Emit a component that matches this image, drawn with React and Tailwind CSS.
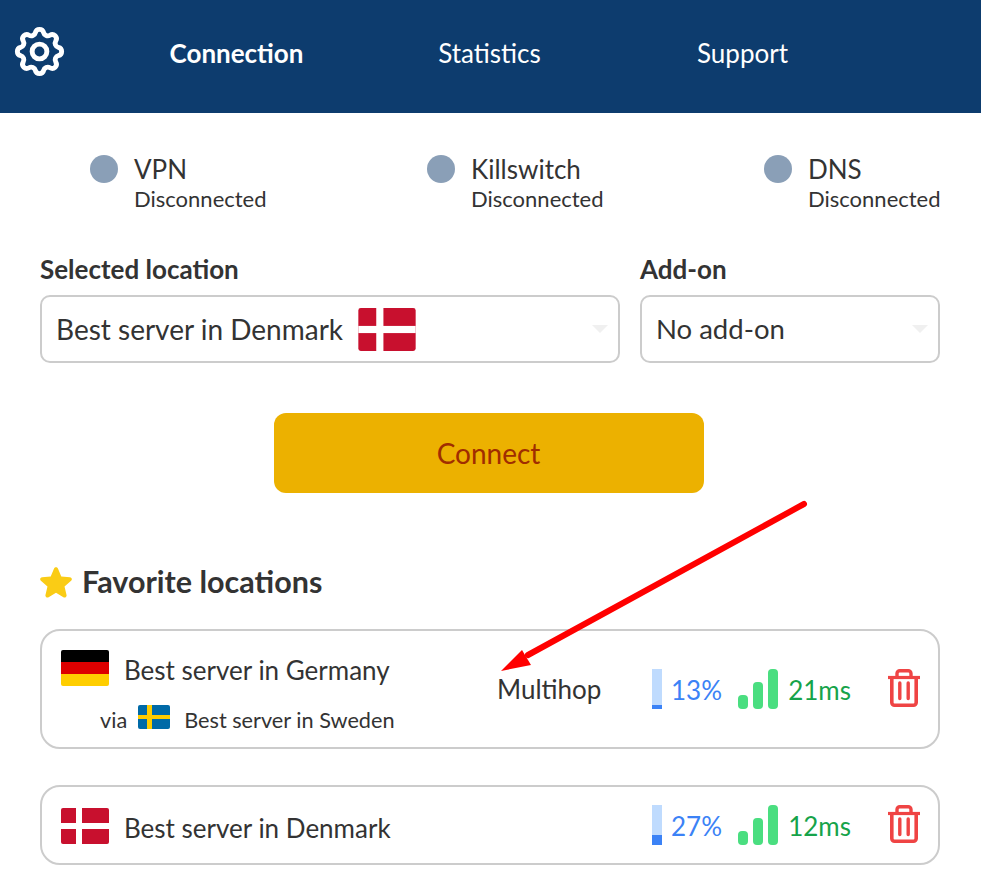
import React from "react";
import { HiOutlineCog } from "react-icons/hi";

const Dk = ({ w, h }) => (
  <svg width={w} height={h} viewBox="0 0 48 36" className="shrink-0">
    <rect width="48" height="36" rx="2" fill="#c8102e" />
    <rect x="15" width="6" height="36" fill="#fff" />
    <rect y="15" width="48" height="6" fill="#fff" />
  </svg>
);
const De = () => (
  <svg width="48" height="36" viewBox="0 0 48 36" className="shrink-0">
    <defs><clipPath id="dc"><rect width="48" height="36" rx="2" /></clipPath></defs>
    <g clipPath="url(#dc)">
      <rect width="48" height="12" fill="#000" />
      <rect y="12" width="48" height="12" fill="#dd0000" />
      <rect y="24" width="48" height="12" fill="#ffce00" />
    </g>
  </svg>
);
const Se = () => (
  <svg width="32" height="24" viewBox="0 0 32 24" className="shrink-0">
    <rect width="32" height="24" rx="2" fill="#006aa7" />
    <rect x="9" width="5" height="24" fill="#fecc00" />
    <rect y="10" width="32" height="4" fill="#fecc00" />
  </svg>
);
const Trash = () => (
  <svg width="32" height="38" viewBox="0 0 32 38" fill="none" stroke="#ef4444" className="shrink-0 -mt-[2px]">
    <path d="M0 8.500h32" strokeWidth="3.200" />
    <path d="M3.800 8.500V33.500a2.700 2.700 0 0 0 2.700 2.700h19a2.700 2.700 0 0 0 2.700-2.700V8.500" strokeWidth="3.600" />
    <path d="M9 8V4.500a2.800 2.800 0 0 1 2.800-2.800h8.400A2.800 2.800 0 0 1 23 4.500V8" strokeWidth="3.400" />
    <path d="M11.800 14V29.500M20.200 14V29.500" strokeWidth="3.400" strokeLinecap="round" />
  </svg>
);
const Load = ({ fill }) => (
  <div className="w-[10px] h-10 bg-[#bfdbfe] flex flex-col justify-end shrink-0">
    <div className="bg-[#3b82f6] w-full" style={{ height: fill }} />
  </div>
);
const Signal = () => (
  <div className="flex items-end gap-[5px] shrink-0">
    <div className="w-[10px] h-[14px] rounded bg-[#4ade80]" />
    <div className="w-[10px] h-[27px] rounded bg-[#4ade80]" />
    <div className="w-[10px] h-10 rounded bg-[#4ade80]" />
  </div>
);
const Stats = ({ pct, fill, ms }) => (
  <div className="flex items-center">
    <Load fill={fill} />
    <span className="w-[60px] text-right text-[26px] text-[#3b82f6] leading-10 pt-[2px]">{pct}</span>
    <div className="ml-[16px]"><Signal /></div>
    <span className="w-[73px] text-right text-[26px] text-[#16a34a] leading-10 pt-[2px]">{ms}</span>
    <div className="ml-[37px]"><Trash /></div>
  </div>
);
const Status = ({ name }) => (
  <div className="flex gap-4 w-[176px]">
    <div className="w-7 h-7 shrink-0 rounded-full bg-[#8a9fb7] mt-[3px]" />
    <div className="flex flex-col text-[#333]">
      <span className="text-[26px] leading-[34px]">{name}</span>
      <span className="text-[22px] leading-[26px] whitespace-nowrap">Disconnected</span>
    </div>
  </div>
);
const Caret = () => <div className="w-0 h-0 border-x-[8px] border-x-transparent border-t-[8px] border-t-[#f0f0f0]" />;

export default function App() {
  return (
    <div className="relative w-[981px] h-[894px] overflow-hidden bg-white text-[#333]" style={{ fontFamily: "Lato, sans-serif" }}>
      <header className="h-[113px] bg-[#0d3c6e] flex items-center text-white">
        <div className="w-[110px] pl-[10px] -mt-[10px]"><HiOutlineCog size={59} strokeWidth={2} /></div>
        <nav className="w-[759px] grid grid-cols-3 text-center text-[26px] -mt-[6px]">
          <span className="font-bold">Connection</span>
          <span>Statistics</span>
          <span>Support</span>
        </nav>
      </header>

      <main className="pl-10 pr-[41px]">
        <div className="flex justify-between pl-[50px] pt-[39px]">
          <Status name="VPN" />
          <Status name="Killswitch" />
          <Status name="DNS" />
        </div>

        <div className="flex gap-5 mt-[40px]">
          <div className="w-[580px]">
            <div className="text-[26px] font-bold leading-[34px] mb-[9px]">Selected location</div>
            <div className="h-[68px] rounded-[10px] border-2 border-[#cccccc] flex items-center pl-[14px] pr-[10px] text-[28px]">
              <span>Best server in Denmark</span>
              <span className="ml-[15px]"><Dk w={58} h={43} /></span>
              <span className="ml-auto"><Caret /></span>
            </div>
          </div>
          <div className="w-[300px]">
            <div className="text-[26px] font-bold leading-[34px] mb-[9px]">Add-on</div>
            <div className="h-[68px] rounded-[10px] border-2 border-[#cccccc] flex items-center pl-[14px] pr-[10px] text-[27.500px]">
              <span>No add-on</span>
              <span className="ml-auto"><Caret /></span>
            </div>
          </div>
        </div>

        <div className="flex justify-center mt-[50px] pr-[3px]">
          <button className="w-[430px] h-20 rounded-[12px] bg-[#ecb100] text-[#a02d00] text-[28px]">Connect</button>
        </div>

        <div className="flex items-center gap-[10px] mt-[69px] h-10">
          <svg width="32" height="31" viewBox="2 2.400 20 19.200" fill="#facc15" className="shrink-0">
            <path d="M10.788 3.21c.448-1.077 1.976-1.077 2.424 0l2.082 5.006 5.404.434c1.164.093 1.636 1.545.749 2.305l-4.117 3.527 1.257 5.273c.271 1.136-.964 2.033-1.96 1.425L12 18.354 7.373 21.18c-.996.608-2.231-.29-1.96-1.425l1.257-5.273-4.117-3.527c-.887-.76-.415-2.212.749-2.305l5.404-.434 2.082-5.005Z" />
          </svg>
          <h2 className="text-[30.500px] font-bold">Favorite locations</h2>
        </div>

        <div className="mt-[27px] h-[120px] rounded-[20px] border-2 border-[#cccccc] flex items-center justify-between pl-[19px] pr-[18px]">
          <div className="w-[436px] flex flex-col">
            <div className="flex items-center gap-[15px] h-9">
              <De />
              <span className="text-[26px] mt-[5px]">Best server in Germany</span>
            </div>
            <div className="flex items-center mt-[19px] pl-[39px] text-[21.700px] h-6">
              <span className="mt-[7px]">via</span>
              <span className="ml-[11px]"><Se /></span>
              <span className="ml-[14px] mt-[7px]">Best server in Sweden</span>
            </div>
          </div>
          <span className="text-[26px] mr-auto mt-[1px]">Multihop</span>
          <Stats pct="13%" fill={4} ms="21ms" />
        </div>

        <div className="mt-[36px] h-[80px] rounded-[20px] border-2 border-[#cccccc] flex items-center justify-between pl-[19px] pr-[18px]">
          <div className="flex items-center gap-[15px] mt-[1px]">
            <Dk w={48} h={36} />
            <span className="text-[26px] mt-[5px]">Best server in Denmark</span>
          </div>
          <Stats pct="27%" fill={10} ms="12ms" />
        </div>
      </main>

      <svg className="absolute left-0 top-0 pointer-events-none" width="981" height="894" fill="none">
        <path d="M804 504L528 655" stroke="#ff0000" strokeWidth="6" strokeLinecap="round" />
        <path d="M501 671L522 650L531 665Z" fill="#ff0000" />
      </svg>
    </div>
  );
}
